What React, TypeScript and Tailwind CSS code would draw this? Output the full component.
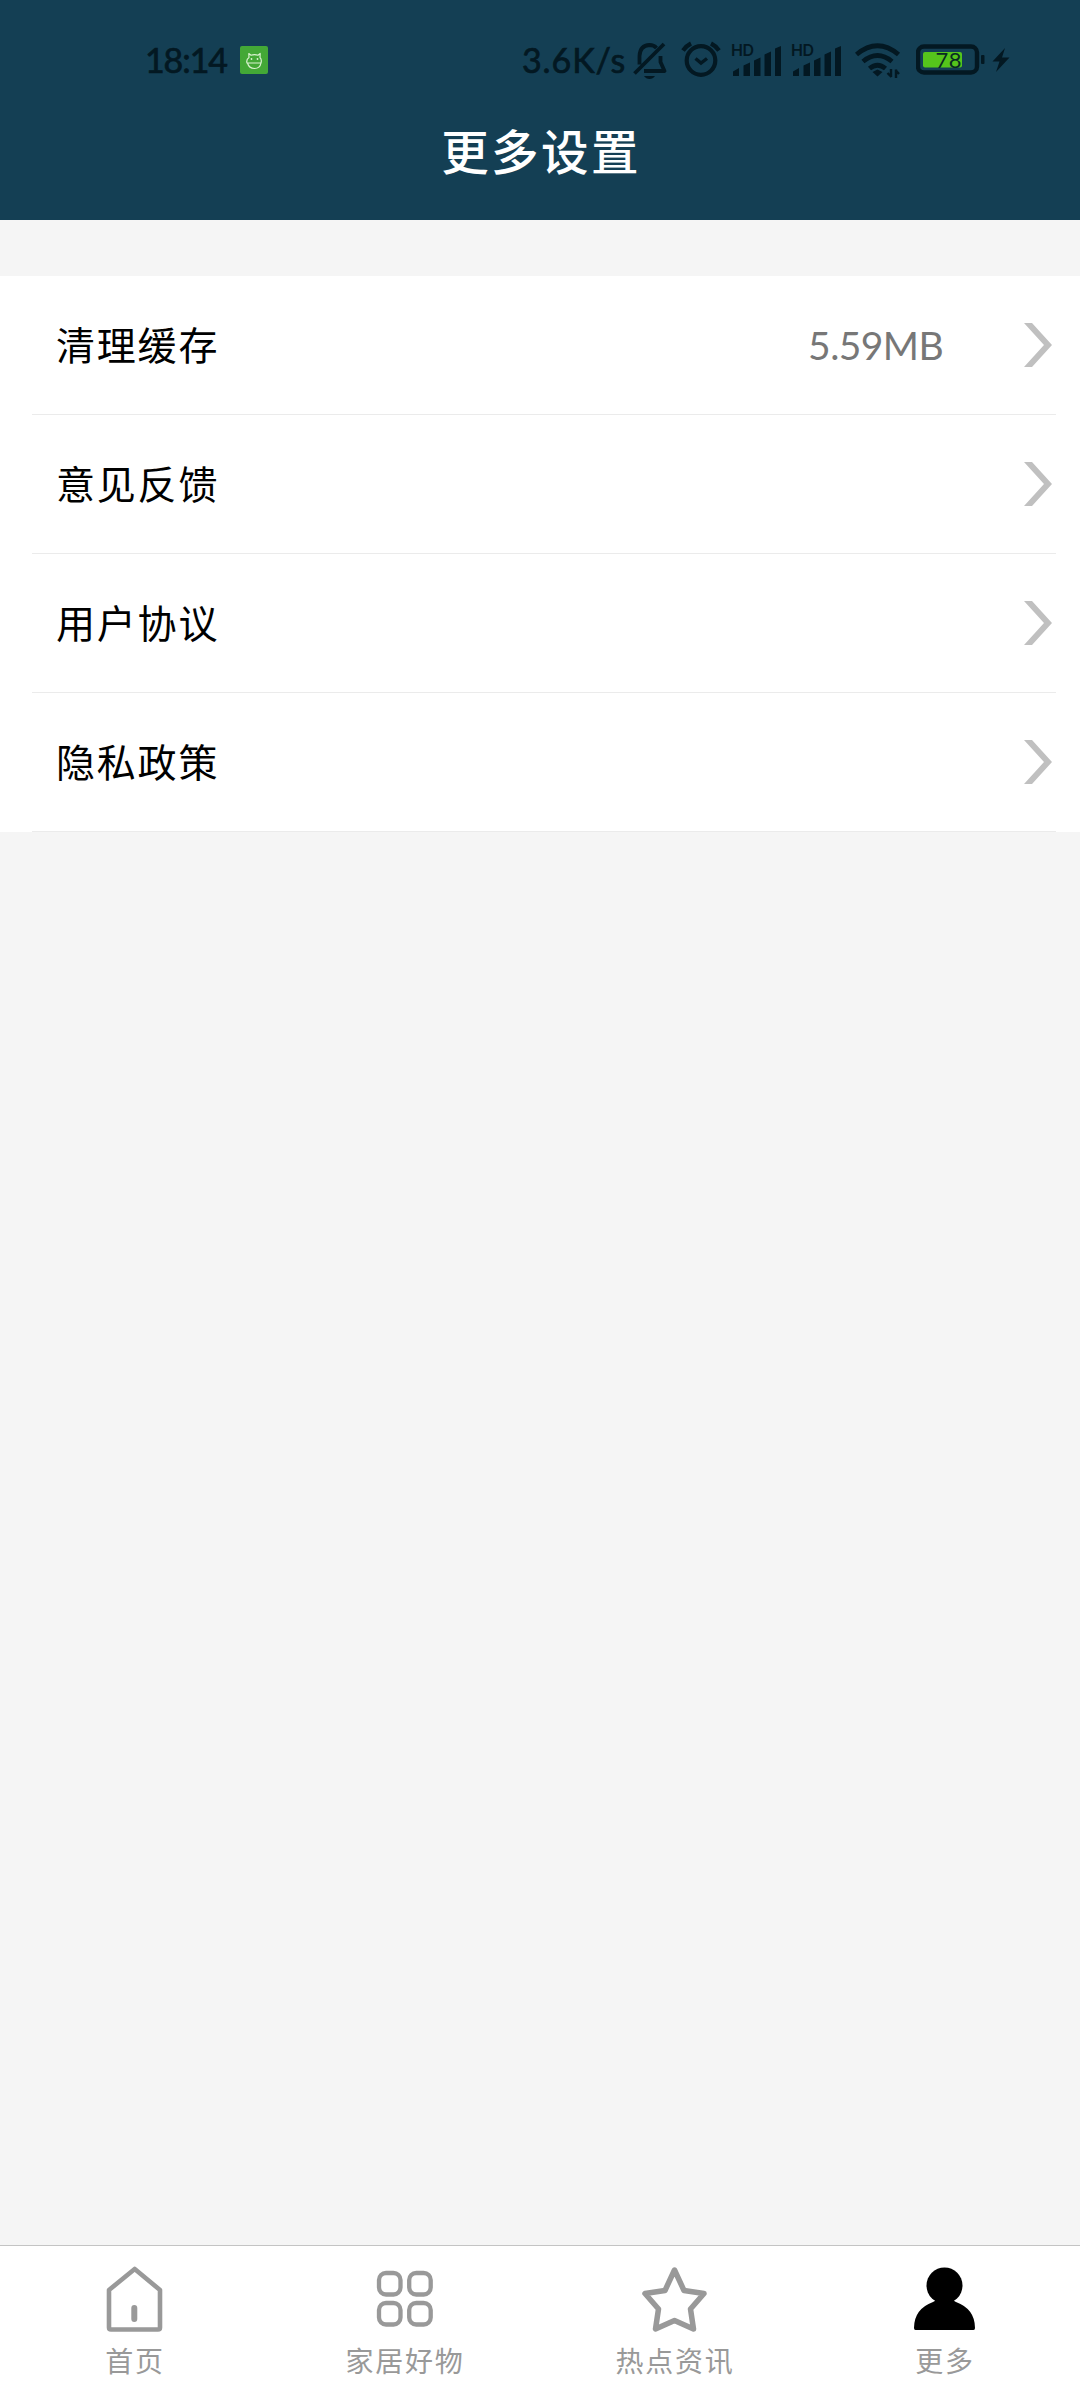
import type { ReactNode } from 'react';

const rows = [
  { label: '清理缓存', value: '5.59MB' },
  { label: '意见反馈' },
  { label: '用户协议' },
  { label: '隐私政策' },
];

function MascotBadge() {
  return (
    <svg className="ml-[13px] h-7 w-7" viewBox="0 0 28 28" fill="none">
      <rect width="28" height="28" rx="2" fill="#43a836" />
      <path
        d="M9 11.5 8.8 7.5l2.2 1.7q3.5-1.2 7 0l2.2-1.7-.2 4q2 2 1 5.5H7q-1-3.5 2-5.5zM7.5 17q1.5 5.5 7 5.5t6.5-5.5"
        stroke="#d9f2cf"
        strokeWidth="1.2"
        strokeLinejoin="round"
      />
      <circle cx="11.5" cy="13" r=".9" fill="#d9f2cf" />
      <circle cx="17.5" cy="13" r=".9" fill="#d9f2cf" />
    </svg>
  );
}

function BellOff() {
  return (
    <svg className="h-10 w-9" viewBox="0 0 36 40" fill="none" stroke="#031822" strokeWidth="3.8" strokeLinejoin="round">
      <path d="M7.5 24.500V16Q8 5.500 17.500 5q4.500 0 7 3M2.500 33.500 32 4M28.500 16v6l4 9H12" />
      <path d="M12 36h11q-2 3-5.500 3T12 36z" fill="#031822" stroke="none" />
    </svg>
  );
}

function AlarmClock() {
  return (
    <svg className="ml-[13px] h-10 w-10" viewBox="0 0 40 40" fill="none" stroke="#031822" strokeWidth="4.2">
      <circle cx="20" cy="20.5" r="14.3" />
      <path d="m14.5 18.5 5.5 4.5 6-4.5" strokeWidth="3.4" />
      <path d="M2 10.5Q5 6 10 3.5M30 3.5q5 2.5 8 7" />
    </svg>
  );
}

function Signal() {
  return (
    <svg className="h-10 w-[52px]" viewBox="0 0 52 40" fill="#031822">
      <text x="0" y="16" fontSize="16" fontWeight="600" fontFamily="Inter, sans-serif" textLength="23">
        HD
      </text>
      <path d="M2 36v-4.5l6-3.5v8zM12.5 36V25.5l6.500-3V36zM23 36V20.5l6.500-3V36zM33.5 36V14.5l6.500-3V36zM44 36V8.500L50 6v30z" />
    </svg>
  );
}

function Wifi() {
  return (
    <svg className="ml-[12px] h-10 w-[46px]" viewBox="0 0 46 40" fill="none" stroke="#031822" strokeWidth="4.8">
      <path d="M1.5 14.5Q22.500-3 43.500 14.500M8 21.500q14.500-12 29 0M14.500 28.500q8-6.500 16 0" />
      <path d="m17.5 32 5-2.5 5 2.5-5 4.5z" fill="#031822" stroke="none" />
      <path d="M36 29v8M36.5 37l-4-4M41 38v-8.500M40.500 30l3.500 4" strokeWidth="2.4" />
    </svg>
  );
}

function Battery() {
  return (
    <svg className="ml-[15px] h-10 w-[95px]" viewBox="0 0 95 40">
      <rect x="2" y="6.5" width="59" height="26" rx="6" fill="none" stroke="#031822" strokeWidth="4.4" />
      <rect x="7" y="12" width="39" height="15.5" rx="2" fill="#55c51c" />
      <rect x="65" y="15" width="3.5" height="9" rx="1" fill="#031822" />
      <text x="19.5" y="28" fontSize="22" fontFamily="Lato, sans-serif" fill="#082a23" textLength="26">
        78
      </text>
      <path d="M89 8 76.500 21.500h7L80 32l13.500-14.500H86z" fill="#031822" />
    </svg>
  );
}

function StatusBar() {
  return (
    <div className="flex h-20 items-end pl-[145px] font-[Lato,sans-serif] text-[34px] leading-10 text-[#031822]">
      <span className="w-[82px] whitespace-nowrap tracking-[-1.1px] [-webkit-text-stroke:0.7px_#031822]">18:14</span>
      <div className="flex h-10 items-center">
        <MascotBadge />
      </div>
      <div className="ml-[254px] flex">
        <span className="w-[110px] whitespace-nowrap tracking-[0.9px] [-webkit-text-stroke:0.7px_#031822]">3.6K/s</span>
        <BellOff />
        <AlarmClock />
        <div className="ml-[10px] flex gap-2">
          <Signal />
          <Signal />
        </div>
        <Wifi />
        <Battery />
      </div>
    </div>
  );
}

function Chevron() {
  return (
    <svg className="h-11 w-7" viewBox="0 0 28 44" fill="#c0c0c0">
      <path d="M0 0h8l20 22L8 44H0l20-22z" />
    </svg>
  );
}

function HomeIcon() {
  return (
    <svg className="h-[66px] w-[66px]" viewBox="0 0 66 66" fill="none" stroke="#999" strokeWidth="4.6" strokeLinejoin="round" strokeLinecap="round">
      <path d="M32.7 3 58 24v37.500q0 2-2 2H9q-2 0-2-2V24z" />
      <path d="M32.3 42v11" strokeWidth="6" />
    </svg>
  );
}

function GridIcon() {
  return (
    <svg className="h-[66px] w-[66px]" viewBox="0 0 66 66" fill="none" stroke="#999" strokeWidth="4.3">
      <rect x="7" y="7" width="21.5" height="21.5" rx="7" />
      <rect x="37.2" y="7" width="21.5" height="21.5" rx="7" />
      <rect x="7" y="37" width="21.5" height="21.5" rx="7" />
      <rect x="37.2" y="37" width="21.5" height="21.5" rx="7" />
    </svg>
  );
}

function StarIcon() {
  return (
    <svg className="h-[66px] w-[66px]" viewBox="0 0 66 66" fill="none" stroke="#999" strokeWidth="5.5" strokeLinejoin="round">
      <path d="M32.5 4 42 24.5 62 27.500 48.500 43 51.500 63 32.500 54.500 13.500 63 16.500 43 3 27.500 23 24.500z" />
    </svg>
  );
}

function PersonIcon() {
  return (
    <svg className="h-[66px] w-[66px]" viewBox="0 0 66 66">
      <circle cx="32.5" cy="19.5" r="18" />
      <path d="M21 36q2.5-1 3-4h17q.5 3 3 4 19 7 19 26 0 2-1.500 2H3.500Q2 64 2 62q0-19 19-26z" />
    </svg>
  );
}

function Tab({ icon, label }: { icon: ReactNode; label: string }) {
  return (
    <button className="flex flex-1 flex-col items-center pt-5">
      {icon}
      <span className="mt-[8px] text-[28px] leading-10 tracking-[1.8px] text-[#999]">{label}</span>
    </button>
  );
}

export default function App() {
  return (
    <div className="flex h-[2400px] w-[1080px] flex-col bg-[#f5f5f5] font-['Noto_Sans_CJK_SC',sans-serif]">
      <header className="h-[220px] bg-[#143f54]">
        <StatusBar />
        <h1 className="mt-[40px] pl-[2px] text-center text-[47.5px] leading-[60px] font-medium tracking-[2.4px] text-white">
          更多设置
        </h1>
      </header>

      <main className="mt-14 flex-1">
        <ul className="bg-white pr-6 pl-8">
          {rows.map((row) => (
            <li key={row.label} className="flex h-[139px] items-center border-b border-[#ebebeb] pr-1 pl-6">
              <span className="flex-1 pb-1 text-[39px] tracking-[1.8px] text-black">{row.label}</span>
              {row.value && (
                <span className="mr-[81px] font-[Lato,sans-serif] text-[39px] tracking-[-0.6px] text-[#777]">{row.value}</span>
              )}
              <Chevron />
            </li>
          ))}
        </ul>
      </main>

      <nav className="flex h-[155px] border-t border-[#c4c4c4] bg-white">
        <Tab icon={<HomeIcon />} label="首页" />
        <Tab icon={<GridIcon />} label="家居好物" />
        <Tab icon={<StarIcon />} label="热点资讯" />
        <Tab icon={<PersonIcon />} label="更多" />
      </nav>
    </div>
  );
}
